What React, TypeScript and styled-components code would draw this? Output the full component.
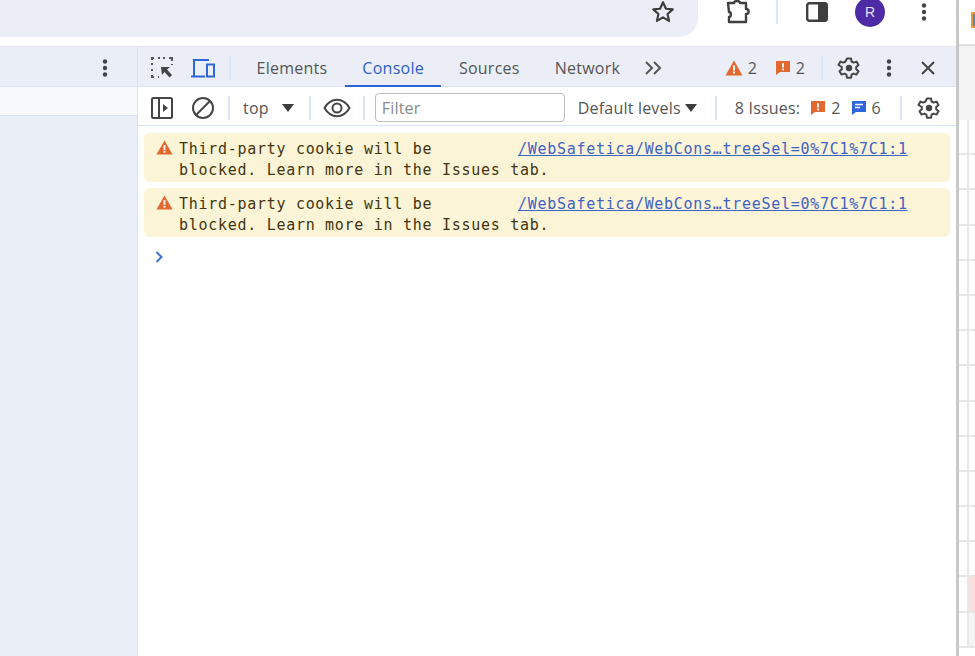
import React from "react";
import styled, { createGlobalStyle } from "styled-components";

const GlobalStyle = createGlobalStyle`
  html, body { margin: 0; padding: 0; background: #fff; overflow: hidden; }
  body { font-family: "Open Sans", "Liberation Sans", sans-serif; color: #474747; }
`;

const Page = styled.div`
  width: 975px;
  height: 656px;
  display: flex;
  overflow: hidden;
`;

const Browser = styled.div`
  width: 956px;
  display: flex;
  flex-direction: column;
  flex: none;
`;

const TopBar = styled.div`
  height: 47px;
  flex: none;
  display: flex;
  background: #fff;
  border-bottom: 1px solid #e3e3e3;
  box-sizing: border-box;
`;

const Omnibox = styled.div`
  width: 698px;
  height: 37px;
  flex: none;
  background: #ebeef6;
  border-bottom-right-radius: 19px;
  display: flex;
  justify-content: flex-end;
  align-items: center;
  padding: 0 22px 13px 0;
  box-sizing: border-box;
`;

const BrowserActions = styled.div`
  flex: 1;
  height: 23px;
  display: flex;
  align-items: center;
  padding-left: 27px;
`;

const Avatar = styled.div`
  width: 30px;
  height: 30px;
  flex: none;
  border-radius: 50%;
  background: #4d2aa6;
  color: #e8e0f6;
  font-size: 14px;
  font-family: "Liberation Sans", sans-serif;
  display: flex;
  align-items: center;
  justify-content: center;
  margin-left: 27px;
`;

const ToolbarSep = styled.div`
  width: 2px;
  height: 24px;
  flex: none;
  background: #dbe6f8;
  margin: 0 28px 0 25px;
`;

const Panes = styled.div`
  flex: 1;
  display: flex;
  min-height: 0;
`;

const LeftPane = styled.div`
  width: 137px;
  flex: none;
  background: #eaeef7;
  display: flex;
  flex-direction: column;
  border-right: 1px solid #d5e2f7;
`;

const LeftHead = styled.div`
  height: 40px;
  box-sizing: border-box;
  display: flex;
  justify-content: flex-end;
  align-items: center;
  padding: 2px 29px 0 0;
  border-bottom: 1px solid #d5e2f7;
`;

const LeftSub = styled.div`
  height: 29px;
  box-sizing: border-box;
  background: #f7f9fd;
  border-bottom: 1px solid #d5e2f7;
`;

const Devtools = styled.div`
  flex: 1;
  min-width: 0;
  display: flex;
  flex-direction: column;
`;

const TabBar = styled.div`
  height: 40px;
  box-sizing: border-box;
  background: #ebeef6;
  border-bottom: 1px solid #d5e2f7;
  display: flex;
  align-items: center;
  padding: 3px 0 0 13px;
`;

const TabList = styled.div`
  display: flex;
  flex: none;
  align-self: flex-end;
  margin: 0 0 -1px 8px;
`;

const Tab = styled.div<{ $active?: boolean }>`
  height: 37px;
  box-sizing: border-box;
  padding: 0 17.5px;
  display: flex;
  align-items: center;
  font-size: 16px;
  letter-spacing: 0.25px;
  color: ${(p) => (p.$active ? "#2f5fc9" : "#555")};
  border-bottom: 2px solid ${(p) => (p.$active ? "#2c62d6" : "transparent")};
`;

const Sep = styled.div`
  width: 2px;
  height: 24px;
  background: #d9e4f6;
  flex: none;
`;

const Count = styled.span`
  font-size: 16px;
  color: #555;
`;

const FilterBar = styled.div`
  height: 39px;
  box-sizing: border-box;
  border-bottom: 1px solid #d5e2f7;
  display: flex;
  align-items: center;
  padding: 3px 0 0 13px;
  font-size: 16px;
  letter-spacing: 0.2px;
  color: #555;
`;

const FilterInput = styled.div`
  width: 190px;
  height: 29px;
  box-sizing: border-box;
  border: 1px solid #bdbdbd;
  border-radius: 4px;
  padding-left: 6px;
  color: #8a8a8a;
  display: flex;
  align-items: center;
  flex: none;
`;

const Group = styled.div<{ $ml?: number; $gap?: number }>`
  display: flex;
  align-items: center;
  flex: none;
  margin-left: ${(p) => p.$ml ?? 0}px;
  gap: ${(p) => p.$gap ?? 0}px;
`;

const Messages = styled.div`
  flex: 1;
  display: flex;
  flex-direction: column;
  gap: 6px;
  padding: 7px 6px 0;
`;

const Warning = styled.div`
  height: 49px;
  box-sizing: border-box;
  background: #fcf4d6;
  border-radius: 6px;
  display: flex;
  padding: 6px 0 0 12px;
  font-family: "DejaVu Sans Mono", "Liberation Mono", monospace;
  font-size: 15px;
  letter-spacing: 0.71px;
  line-height: 21px;
  color: #43350f;
`;

const WarningText = styled.div`
  width: 339px;
  flex: none;
  margin-left: 6px;
  white-space: nowrap;
`;

const SourceLink = styled.a`
  color: #3f62c4;
  text-decoration: underline;
  white-space: nowrap;
`;

const Prompt = styled.div`
  padding: 3px 0 0 11px;
  height: 20px;
`;

const Strip = styled.div`
  flex: 1;
  border-left: 3px solid #c8c8c8;
  display: flex;
  flex-direction: column;
  background: #fff;
`;

const StripHeader = styled.div`
  height: 46px;
  flex: none;
  box-sizing: border-box;
  border-bottom: 2px solid #e0e0e0;
  display: flex;
  justify-content: flex-end;
  padding-top: 12px;
`;

const Favicon = styled.div`
  width: 4px;
  height: 16px;
  box-sizing: border-box;
  background: #3f8fd0;
  border: solid #e09a3a;
  border-width: 2px 0 2px 2px;
`;

const StripPanel = styled.div`
  height: 74px;
  flex: none;
  background: #f3f3f3;
`;

const SheetRow = styled.div`
  height: 35.2px;
  flex: none;
  box-sizing: border-box;
  border-bottom: 2px solid #e6e6e6;
  display: flex;
  justify-content: flex-end;
`;

const SheetCell = styled.div<{ $bg?: string }>`
  width: 6px;
  border-left: 2px solid #e8e8e8;
  background: ${(p) => p.$bg ?? "#fff"};
`;

const Warn = ({ size = 18 }: { size?: number }) => (
  <svg width={size} height={size} viewBox="0 0 18 18">
    <path d="M9 1.5 17.5 16.5H.5Z" fill="#e1692f" />
    <rect x="8" y="6.5" width="2" height="5" fill="#fff" />
    <rect x="8" y="12.5" width="2" height="2" fill="#fff" />
  </svg>
);

const Bubble = ({ color, lines }: { color: string; lines?: boolean }) => (
  <svg width="16" height="16" viewBox="0 0 16 16">
    <path d="M1 1h14v11H5l-4 3z" fill={color} />
    {lines ? (
      <path d="M4 4.5h8M4 7.5h5" stroke="#fff" strokeWidth="1.4" />
    ) : (
      <path d="M8 3.2v4.4M8 8.6v1.8" stroke="#fff" strokeWidth="1.8" />
    )}
  </svg>
);

const Gear = () => (
  <svg width="24" height="24" viewBox="0 0 24 24" fill="none" stroke="#454545" strokeWidth="2" strokeLinejoin="round">
    <path d="M10 2.5h4l.6 3 2 1.1 2.9-1 2 3.4-2.3 2v2.2l2.3 2-2 3.4-2.9-1-2 1.1-.6 3h-4l-.6-3-2-1.1-2.9 1-2-3.4 2.3-2V11L1.5 9l2-3.4 2.9 1 2-1.1z" />
    <circle cx="12" cy="12" r="3.2" fill="#454545" stroke="none" />
  </svg>
);

const Dots = () => (
  <svg width="6" height="18" viewBox="0 0 6 18" fill="#454545">
    <circle cx="3" cy="2.5" r="2.2" />
    <circle cx="3" cy="9" r="2.2" />
    <circle cx="3" cy="15.5" r="2.2" />
  </svg>
);

const Caret = () => (
  <svg width="12" height="8" viewBox="0 0 12 8" fill="#3d3d3d">
    <path d="M0 0h12L6 8z" />
  </svg>
);

const MessageRow = () => (
  <Warning>
    <Warn size={17} />
    <WarningText>
      Third-party cookie will be
      <br />
      blocked. Learn more in the Issues tab.
    </WarningText>
    <SourceLink>/WebSafetica/WebCons…treeSel=0%7C1%7C1:1</SourceLink>
  </Warning>
);

const sheetTints: (string | undefined)[] = Array.from({ length: 13 }, () => undefined);
sheetTints.push("#fbdede", "#f4f4f4");

export default function App() {
  return (
    <Page>
      <GlobalStyle />
      <Browser>
        <TopBar>
          <Omnibox>
            <svg width="26" height="26" viewBox="0 0 24 24" fill="none" stroke="#3c3c3c" strokeWidth="2" strokeLinejoin="round">
              <path d="M12 3l2.7 6 6.3.6-4.8 4.2 1.4 6.4L12 16.9l-5.6 3.3 1.4-6.4L3 9.6 9.3 9z" />
            </svg>
          </Omnibox>
          <BrowserActions>
            <svg width="26" height="24" viewBox="0 0 26 24" fill="none" stroke="#3f3f3f" strokeWidth="2.4" strokeLinejoin="round">
              <path d="M3 3h6c0-2.6 6-2.6 6 0h6v6c3.5 0 3.5 5 0 5v8H4v-5c2.5 0 2.5-5 0-5z" />
            </svg>
            <ToolbarSep />
            <svg width="22" height="22" viewBox="0 0 22 22">
              <rect x="1.2" y="2.2" width="19.6" height="17.6" rx="2" fill="none" stroke="#3f3f3f" strokeWidth="2.4" />
              <rect x="12" y="2" width="9" height="18" fill="#3f3f3f" />
            </svg>
            <Avatar>R</Avatar>
            <Group $ml={36}>
              <Dots />
            </Group>
          </BrowserActions>
        </TopBar>
        <Panes>
          <LeftPane>
            <LeftHead>
              <Dots />
            </LeftHead>
            <LeftSub />
          </LeftPane>
          <Devtools>
            <TabBar>
              <svg width="23" height="22" viewBox="0 0 23 22" fill="none">
                <path d="M1 18v2h2M1 14v-2M1 8V6M1 3V1h2M7 1h2M12 1h2M18 1h3v3M21 7v1M7 20h1" stroke="#555" strokeWidth="2" />
                <path d="M10 10h9l-3 2.5 5 5.5-2.5 2.5-5-5.5L11 18z" fill="#444" />
              </svg>
              <Group $ml={17}>
                <svg width="24" height="22" viewBox="0 0 24 22" fill="none" stroke="#2f66dc" strokeWidth="2">
                  <path d="M3 19V3h15M0 19.5h14" />
                  <rect x="16" y="7.5" width="7" height="12" />
                </svg>
              </Group>
              <Group $ml={14}>
                <Sep />
              </Group>
              <TabList>
                <Tab>Elements</Tab>
                <Tab $active>Console</Tab>
                <Tab>Sources</Tab>
                <Tab>Network</Tab>
              </TabList>
              <Group $ml={6}>
                <svg width="20" height="16" viewBox="0 0 20 16" fill="none" stroke="#555" strokeWidth="2">
                  <path d="M2 2l6 6-6 6M10 2l6 6-6 6" />
                </svg>
              </Group>
              <Group $ml={61} $gap={5}>
                <Warn />
                <Count>2</Count>
              </Group>
              <Group $ml={18} $gap={5}>
                <Bubble color="#e1692f" />
                <Count>2</Count>
              </Group>
              <Group $ml={16}>
                <Sep />
              </Group>
              <Group $ml={14}>
                <Gear />
              </Group>
              <Group $ml={25}>
                <Dots />
              </Group>
              <Group $ml={28}>
                <svg width="16" height="16" viewBox="0 0 16 16" stroke="#454545" strokeWidth="2">
                  <path d="M2 2l12 12M14 2L2 14" />
                </svg>
              </Group>
            </TabBar>
            <FilterBar>
              <svg width="22" height="22" viewBox="0 0 22 22" fill="none">
                <rect x="1" y="1" width="20" height="20" rx="1.5" stroke="#454545" strokeWidth="2" />
                <path d="M8 1v20" stroke="#454545" strokeWidth="2" />
                <path d="M12 7l5 4-5 4z" fill="#454545" />
              </svg>
              <Group $ml={18}>
                <svg width="24" height="24" viewBox="0 0 24 24" fill="none" stroke="#454545" strokeWidth="2">
                  <circle cx="12" cy="12" r="10" />
                  <path d="M5 19L19 5" />
                </svg>
              </Group>
              <Group $ml={13}>
                <Sep />
              </Group>
              <Group $ml={13} $gap={13}>
                <span>top</span>
                <Caret />
              </Group>
              <Group $ml={15}>
                <Sep />
              </Group>
              <Group $ml={12}>
                <svg width="28" height="20" viewBox="0 0 28 20" fill="none" stroke="#454545" strokeWidth="2">
                  <path d="M1.5 10C5 4 9 1.8 14 1.8S23 4 26.5 10C23 16 19 18.2 14 18.2S5 16 1.5 10z" />
                  <circle cx="14" cy="10" r="4.5" />
                </svg>
              </Group>
              <Group $ml={12}>
                <Sep />
              </Group>
              <Group $ml={10}>
                <FilterInput>Filter</FilterInput>
              </Group>
              <Group $ml={13} $gap={4}>
                <span>Default levels</span>
                <Caret />
              </Group>
              <Group $ml={18}>
                <Sep />
              </Group>
              <Group $ml={18} $gap={10}>
                <span>8 Issues:</span>
                <Group $gap={5}>
                  <Bubble color="#e1692f" />
                  <span>2</span>
                </Group>
                <Group $gap={5}>
                  <Bubble color="#2f66dc" lines />
                  <span>6</span>
                </Group>
              </Group>
              <Group $ml={19}>
                <Sep />
              </Group>
              <Group $ml={15}>
                <Gear />
              </Group>
            </FilterBar>
            <Messages>
              <MessageRow />
              <MessageRow />
              <Prompt>
                <svg width="9" height="12" viewBox="0 0 9 12" fill="none" stroke="#3f6fe0" strokeWidth="2">
                  <path d="M1.5 1l5 5-5 5" />
                </svg>
              </Prompt>
            </Messages>
          </Devtools>
        </Panes>
      </Browser>
      <Strip>
        <StripHeader>
          <Favicon />
        </StripHeader>
        <StripPanel />
        {sheetTints.map((tint, i) => (
          <SheetRow key={i}>
            <SheetCell $bg={tint} />
          </SheetRow>
        ))}
      </Strip>
    </Page>
  );
}
